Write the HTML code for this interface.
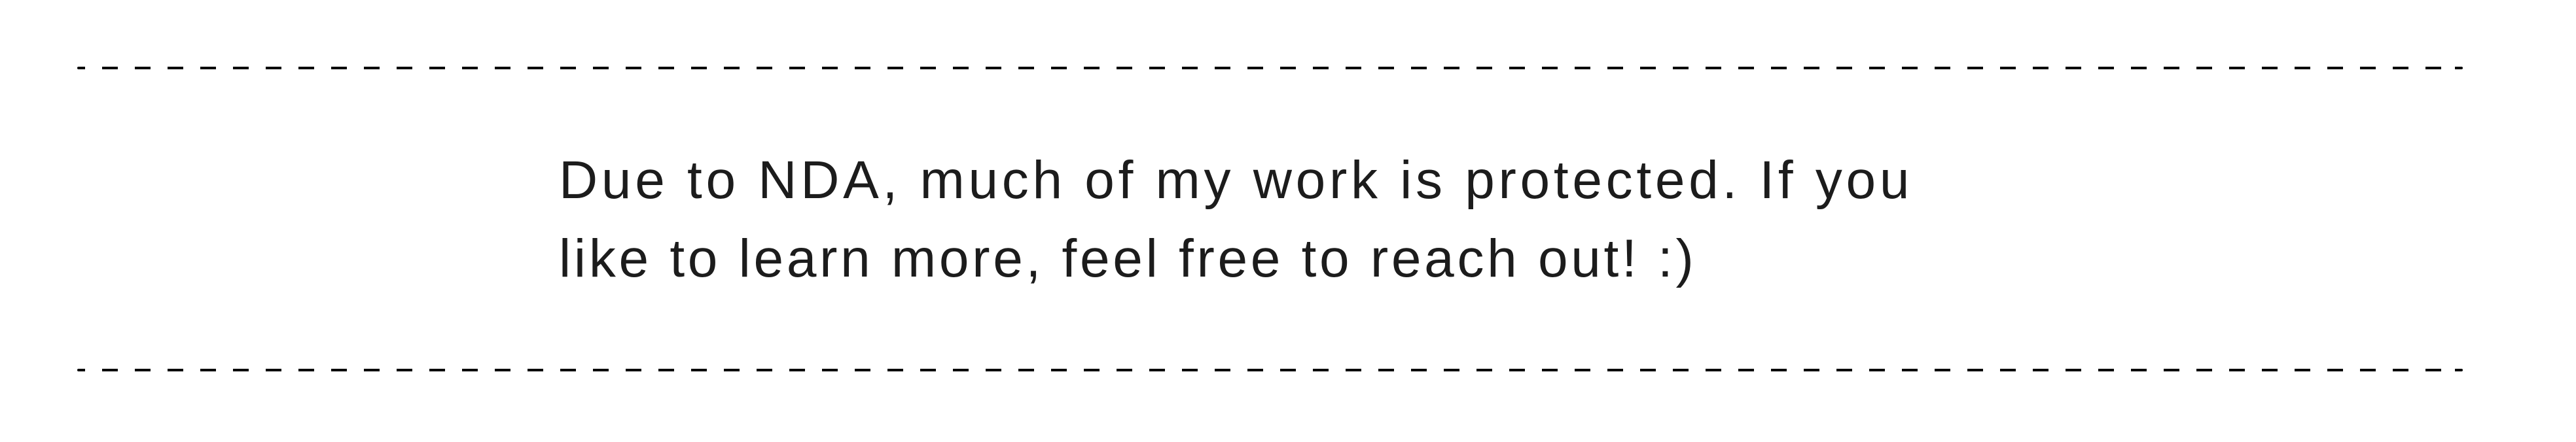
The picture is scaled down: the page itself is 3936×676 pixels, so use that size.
<!DOCTYPE html>
<html><head><style>
html,body{margin:0;padding:0;background:#fff;width:3936px;height:676px;overflow:hidden}
.line{position:absolute;left:118px;width:3645px;height:4px;
background:repeating-linear-gradient(to right,#000 0 24px,transparent 24px 50px);background-position:-12px 0;border-radius:2px}
.t{position:absolute;left:854px;font-family:"Liberation Sans",sans-serif;font-size:82px;color:#1c1c1c;white-space:nowrap;letter-spacing:5.7px;line-height:120px}
</style></head><body>
<div class="line" style="top:102px"></div>
<div class="t" style="top:216px">Due to NDA, much of my work is protected. If you<br><span style="letter-spacing:4.7px">like to learn more, feel free to reach out! :)</span></div>
<div class="line" style="top:564px"></div>
</body></html>
